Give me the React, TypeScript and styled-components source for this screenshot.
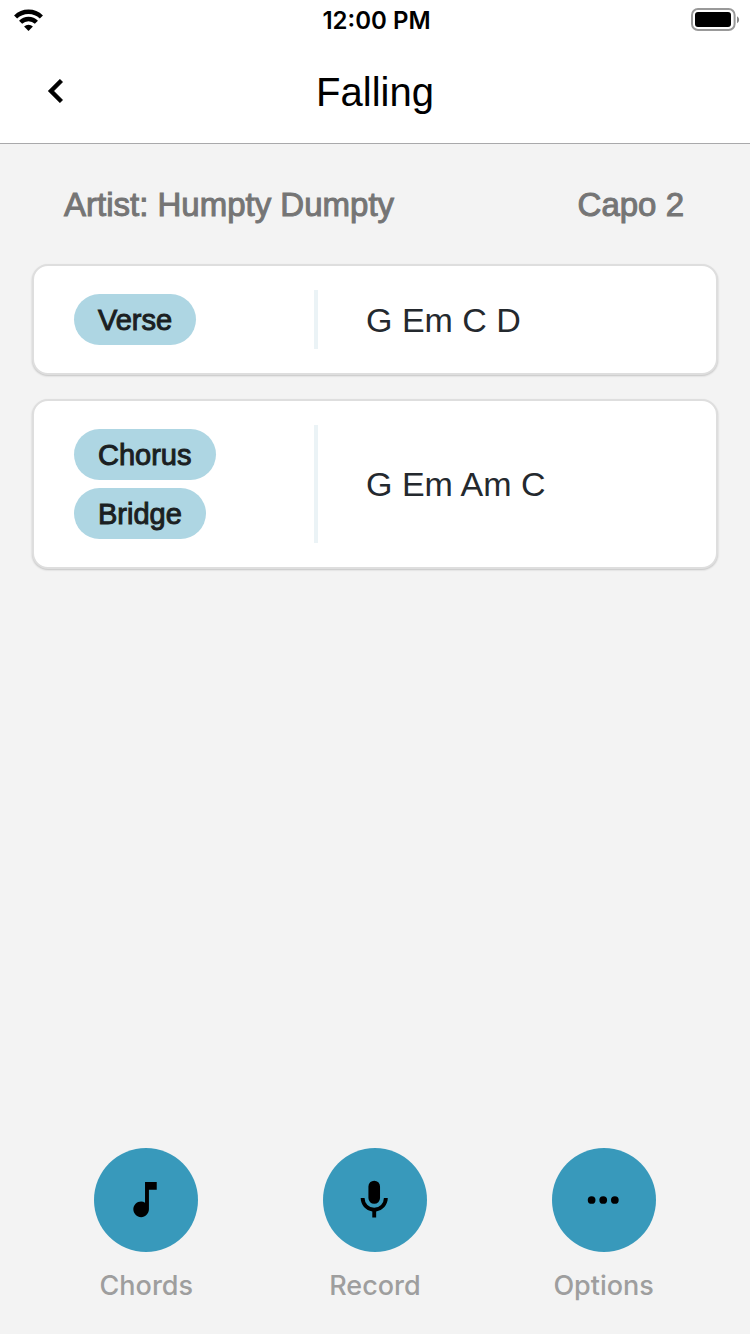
import React from "react";
import styled, { createGlobalStyle } from "styled-components";

const GlobalStyle = createGlobalStyle`
  * { box-sizing: border-box; }
  body { margin: 0; background: #f3f3f3; }
  h1, h2, p, ul { margin: 0; padding: 0; }
  button { border: 0; padding: 0; background: none; font: inherit; color: inherit; cursor: pointer; }
`;

const helvetica = `"Helvetica Neue", "Liberation Sans", Arial, sans-serif`;
const system = `Inter, "Liberation Sans", sans-serif`;

const Screen = styled.div`
  display: flex;
  flex-direction: column;
  min-height: 100vh;
  font-family: ${helvetica};
`;

const StatusBar = styled.div`
  display: grid;
  grid-template-columns: 1fr auto 1fr;
  align-items: center;
  height: 40px;
  padding: 0 10px 0 13px;
  background: #fff;
  color: #000;
`;

const Clock = styled.time`
  padding-top: 2px;
  font: 600 24px/28px ${system};
`;

const BatterySlot = styled.div`
  display: flex;
  justify-content: flex-end;
`;

const Header = styled.header`
  display: grid;
  grid-template-columns: 48px 1fr 48px;
  align-items: start;
  height: 104px;
  padding: 27px 32px 0;
  background: #fff;
  border-bottom: 1px solid #a9a9ab;
`;

const BackButton = styled.button`
  display: flex;
  height: 48px;
`;

const Title = styled.h1`
  font-size: 40px;
  line-height: 50px;
  font-weight: 400;
  text-align: center;
  color: #000;
`;

const Main = styled.main`
  flex: 1;
  padding: 40px 32px 24px;
`;

const SongInfo = styled.div`
  display: flex;
  justify-content: space-between;
  padding: 0 34px 38px 32px;
  font-size: 33px;
  line-height: 42px;
  color: #757575;
  -webkit-text-stroke: 1px #757575;
`;

const PartList = styled.div`
  display: flex;
  flex-direction: column;
  gap: 24px;
`;

const PartCard = styled.section`
  display: flex;
  padding: 24px 40px;
  background: #fff;
  border: 2px solid #dedede;
  border-radius: 16px;
  box-shadow: 0 1px 2px rgba(0, 0, 0, 0.2);
`;

const PartNames = styled.div`
  display: flex;
  flex-direction: column;
  align-items: flex-start;
  gap: 8px;
  width: 244px;
  padding: 4px 0;
  border-right: 4px solid #ebf3f6;
`;

const Pill = styled.h2`
  padding: 1px 24px 0;
  border-radius: 26px;
  background: #aed6e3;
  color: #1b1f22;
  font-size: 29px;
  line-height: 50px;
  font-weight: 400;
  -webkit-text-stroke: 1px #1b1f22;
`;

const Progression = styled.p`
  align-self: center;
  padding-left: 48px;
  font-size: 34px;
  line-height: 40px;
  color: #24292e;
`;

const Actions = styled.nav`
  display: grid;
  grid-template-columns: repeat(3, 1fr);
  padding: 0 32px 30px;
`;

const Action = styled.button`
  display: flex;
  flex-direction: column;
  align-items: center;
  gap: 16px;
  justify-self: center;
  color: #9e9e9e;
`;

const ActionDisc = styled.span`
  display: grid;
  place-items: center;
  width: 104px;
  height: 104px;
  border-radius: 50%;
  background: #3899bb;
  color: #000;
`;

const ActionLabel = styled.span`
  font: 500 27px/36px ${system};
`;

const WifiIcon = () => (
  <svg width="31" height="24" viewBox="0 0 31 24" fill="none" stroke="currentColor" strokeWidth="4.4" aria-label="Wi-Fi">
    <path d="M2.6 9a18.4 18.4 0 0 1 25.8 0" />
    <path d="M7.6 14.3a11.2 11.2 0 0 1 15.8 0" />
    <path d="M11.1 18.6a6.4 6.4 0 0 1 8.8 0l-4.4 4.3z" fill="currentColor" stroke="none" />
  </svg>
);

const BatteryIcon = () => (
  <svg width="49" height="24" viewBox="0 0 49 24" aria-label="Battery full">
    <rect x="1" y="1" width="42.6" height="21" rx="6" fill="none" stroke="#999" strokeWidth="2" />
    <rect x="4" y="4" width="36" height="15" rx="3" fill="#000" />
    <path d="M46 8.2c2.8 1.4 2.8 5.6 0 7z" fill="#888" />
  </svg>
);

const ChevronIcon = () => (
  <svg width="48" height="48" viewBox="-.3 -.3 24.6 24.6" fill="currentColor">
    <path d="M15.41 7.41 14 6l-6 6 6 6 1.41-1.41L10.83 12z" stroke="currentColor" strokeWidth=".3" strokeLinejoin="round" />
  </svg>
);

const NoteIcon = () => (
  <svg width="48" height="48" viewBox=".2 -.1 24.6 24.6" fill="currentColor">
    <path d="M12 3v10.55c-.59-.34-1.27-.55-2-.55-2.21 0-4 1.79-4 4s1.79 4 4 4 4-1.79 4-4V7h4V3z" />
  </svg>
);

const MicIcon = () => (
  <svg width="48" height="48" viewBox="0 -.4 24.8 24.8" fill="currentColor">
    <path d="M12 2a3 3 0 0 1 3 3v6a3 3 0 0 1-6 0V5a3 3 0 0 1 3-3m7 9c0 3.53-2.61 6.44-6 6.93V21h-2v-3.07c-3.39-.49-6-3.4-6-6.93h2a5 5 0 0 0 10 0z" />
  </svg>
);

const DotsIcon = () => (
  <svg width="48" height="48" viewBox="0 -.4 24.8 24.8" fill="currentColor">
    <circle cx="6" cy="12" r="2" />
    <circle cx="12" cy="12" r="2" />
    <circle cx="18" cy="12" r="2" />
  </svg>
);

const parts = [
  { names: ["Verse"], chords: "G Em C D" },
  { names: ["Chorus", "Bridge"], chords: "G Em Am C" },
];

const actions = [
  { label: "Chords", Icon: NoteIcon },
  { label: "Record", Icon: MicIcon },
  { label: "Options", Icon: DotsIcon },
];

export default function App() {
  return (
    <Screen>
      <GlobalStyle />
      <StatusBar>
        <WifiIcon />
        <Clock>12:00 PM</Clock>
        <BatterySlot>
          <BatteryIcon />
        </BatterySlot>
      </StatusBar>
      <Header>
        <BackButton type="button" aria-label="Back">
          <ChevronIcon />
        </BackButton>
        <Title>Falling</Title>
      </Header>
      <Main>
        <SongInfo>
          <p>Artist: Humpty Dumpty</p>
          <p>Capo 2</p>
        </SongInfo>
        <PartList>
          {parts.map((part) => (
            <PartCard key={part.names[0]}>
              <PartNames>
                {part.names.map((name) => (
                  <Pill key={name}>{name}</Pill>
                ))}
              </PartNames>
              <Progression>{part.chords}</Progression>
            </PartCard>
          ))}
        </PartList>
      </Main>
      <Actions>
        {actions.map(({ label, Icon }) => (
          <Action key={label} type="button">
            <ActionDisc>
              <Icon />
            </ActionDisc>
            <ActionLabel>{label}</ActionLabel>
          </Action>
        ))}
      </Actions>
    </Screen>
  );
}
